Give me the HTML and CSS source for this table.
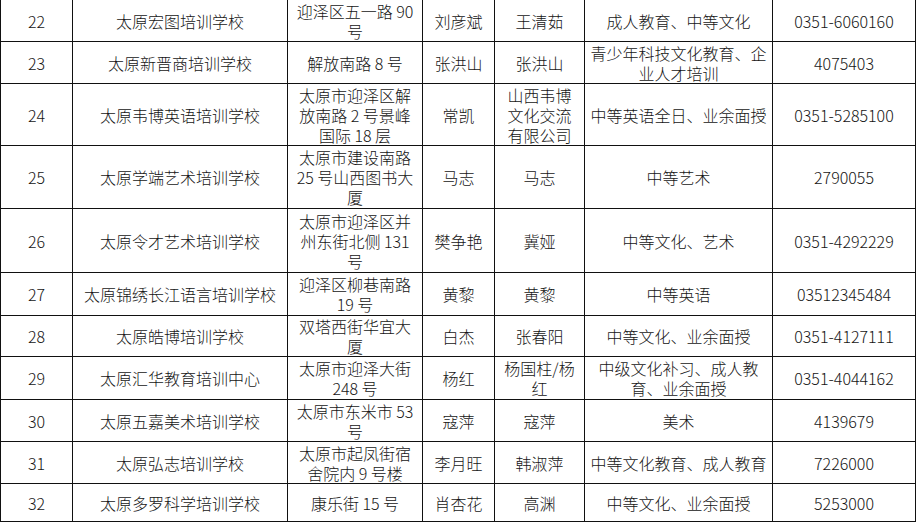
FILE: index.html
```html
<!DOCTYPE html>
<html lang="zh-CN">
<head>
<meta charset="utf-8">
<title>太原培训学校名录</title>
<link rel="stylesheet" href="styles.css">
</head>
<body>
<table class="list">
  <colgroup>
    <col class="c-no"><col class="c-name"><col class="c-addr"><col class="c-leg"><col class="c-head"><col class="c-scope"><col class="c-tel">
  </colgroup>
  <tbody>
    <tr class="r2"><td>22</td><td>太原宏图培训学校</td><td>迎泽区五一路 90<br>号</td><td>刘彦斌</td><td>王清茹</td><td>成人教育、中等文化</td><td>0351-6060160</td></tr>
    <tr class="r2"><td>23</td><td>太原新晋商培训学校</td><td>解放南路 8 号</td><td>张洪山</td><td>张洪山</td><td>青少年科技文化教育、企<br>业人才培训</td><td>4075403</td></tr>
    <tr class="r3a"><td>24</td><td>太原韦博英语培训学校</td><td>太原市迎泽区解<br>放南路 2 号景峰<br>国际 18 层</td><td>常凯</td><td>山西韦博<br>文化交流<br>有限公司</td><td>中等英语全日、业余面授</td><td>0351-5285100</td></tr>
    <tr class="r3"><td>25</td><td>太原学端艺术培训学校</td><td>太原市建设南路<br>25 号山西图书大<br>厦</td><td>马志</td><td>马志</td><td>中等艺术</td><td>2790055</td></tr>
    <tr class="r3b"><td>26</td><td>太原令才艺术培训学校</td><td>太原市迎泽区并<br>州东街北侧 131<br>号</td><td>樊争艳</td><td>冀娅</td><td>中等文化、艺术</td><td>0351-4292229</td></tr>
    <tr class="r2b"><td>27</td><td>太原锦绣长江语言培训学校</td><td>迎泽区柳巷南路<br>19 号</td><td>黄黎</td><td>黄黎</td><td>中等英语</td><td>03512345484</td></tr>
    <tr class="r2a"><td>28</td><td>太原皓博培训学校</td><td>双塔西街华宜大<br>厦</td><td>白杰</td><td>张春阳</td><td>中等文化、业余面授</td><td>0351-4127111</td></tr>
    <tr class="r2b"><td>29</td><td>太原汇华教育培训中心</td><td>太原市迎泽大街<br>248 号</td><td>杨红</td><td>杨国柱/杨<br>红</td><td>中级文化补习、成人教<br>育、业余面授</td><td>0351-4044162</td></tr>
    <tr class="r2"><td>30</td><td>太原五嘉美术培训学校</td><td>太原市东米市 53<br>号</td><td>寇萍</td><td>寇萍</td><td>美术</td><td>4139679</td></tr>
    <tr class="r2"><td>31</td><td>太原弘志培训学校</td><td>太原市起凤街宿<br>舍院内 9 号楼</td><td>李月旺</td><td>韩淑萍</td><td>中等文化教育、成人教育</td><td>7226000</td></tr>
    <tr class="r1"><td>32</td><td>太原多罗科学培训学校</td><td>康乐街 15 号</td><td>肖杏花</td><td>高渊</td><td>中等文化、业余面授</td><td>5253000</td></tr>
  </tbody>
</table>
</body>
</html>
```

FILE: styles.css
```css
html, body {
  margin: 0;
  padding: 0;
  background: #ffffff;
}

body {
  font-family: "Noto Sans CJK SC", "Noto Sans", sans-serif;
  font-size: 16px;
  font-weight: 300;
  color: #151515;
}

.list {
  border-collapse: collapse;
  table-layout: fixed;
  width: 915px;
  margin-top: -1px;
}

.c-no { width: 72px; }
.c-name { width: 215px; }
.c-addr { width: 135px; }
.c-leg { width: 72px; }
.c-head { width: 90px; }
.c-scope { width: 188px; }
.c-tel { width: 143px; }

.list td {
  border: 1px solid #111111;
  padding: 0;
  text-align: center;
  vertical-align: middle;
  line-height: 20px;
  white-space: nowrap;
  overflow: hidden;
}

.r1 { height: 38px; }
.r2 { height: 42px; }
.r2a { height: 41px; }
.r2b { height: 43px; }
.r3 { height: 63px; }
.r3a { height: 62px; }
.r3b { height: 64px; }
```
